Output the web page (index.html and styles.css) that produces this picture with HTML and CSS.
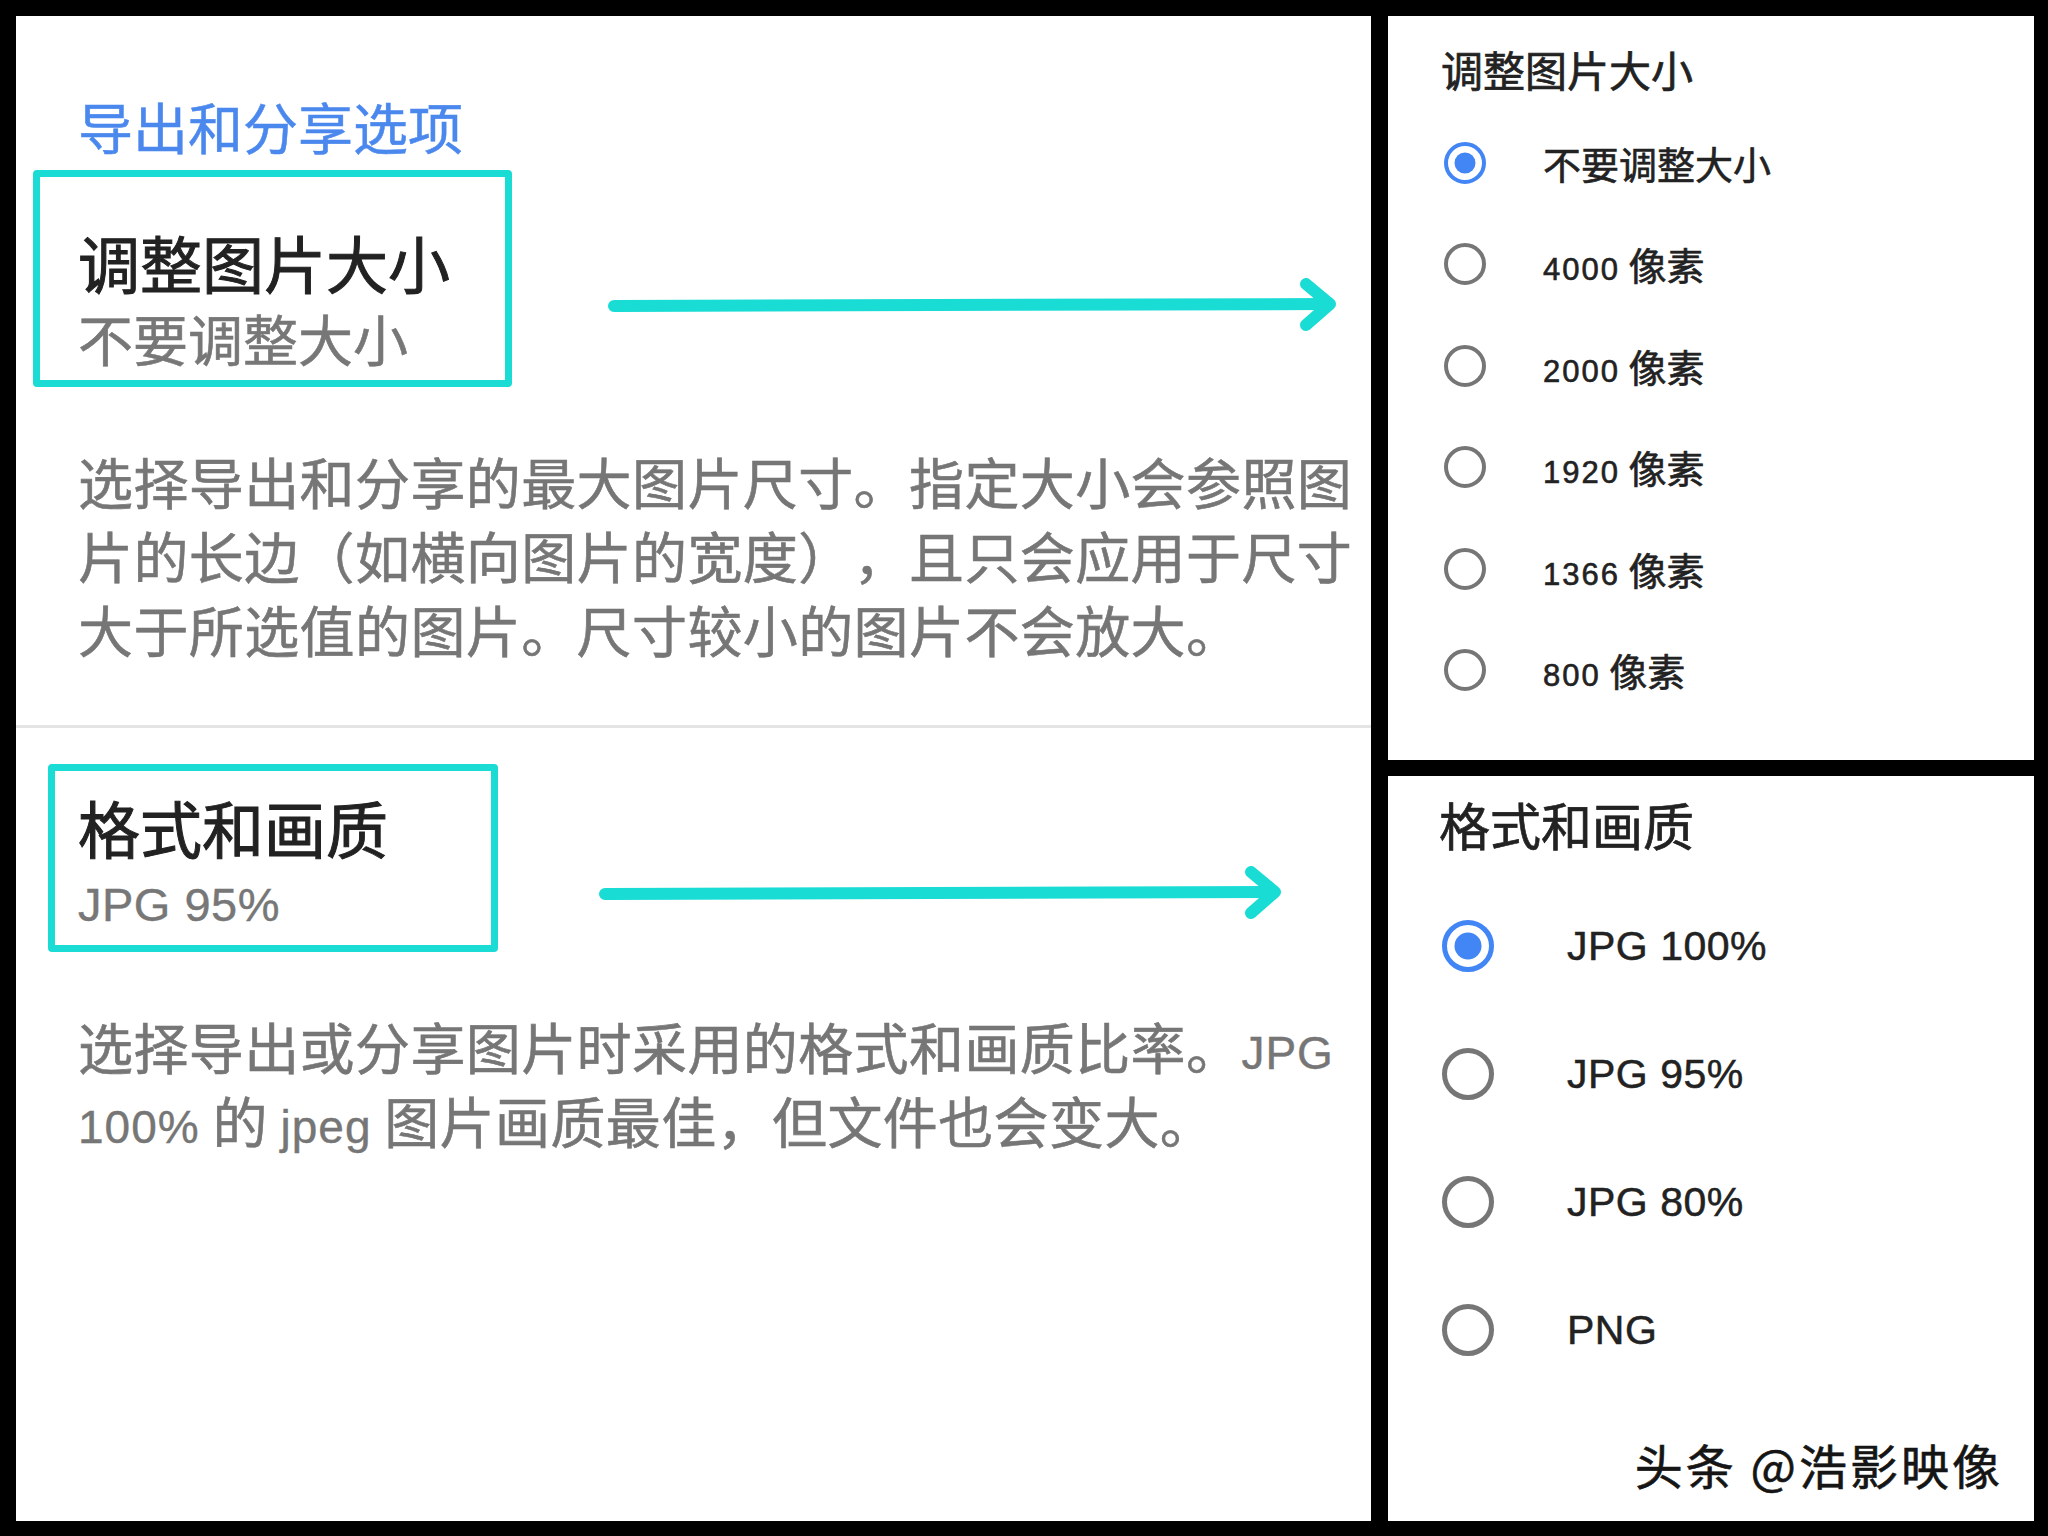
FILE: index.html
```html
<!DOCTYPE html>
<html lang="zh-CN">
<head>
<meta charset="utf-8">
<title>导出和分享选项</title>
<link rel="stylesheet" href="styles.css">
</head>
<body>
<div class="page">
  <section class="main">
    <h1 class="title">导出和分享选项</h1>
    <div class="row row-1">
      <div class="hl hl-1">
        <div class="pref-title">调整图片大小</div>
        <div class="pref-sub">不要调整大小</div>
      </div>
      <svg class="arrow arrow-1" viewBox="0 0 734 60" width="734" height="60">
        <path d="M8 31 L722 29" />
        <polyline points="700,9 724,29 700,50" />
      </svg>
    </div>
    <p class="desc desc-1">选择导出和分享的最大图片尺寸。指定大小会参照图片的长边（如横向图片的宽度），且只会应用于尺寸大于所选值的图片。尺寸较小的图片不会放大。</p>
    <div class="divider"></div>
    <div class="row row-2">
      <div class="hl hl-2">
        <div class="pref-title">格式和画质</div>
        <div class="pref-sub pref-sub-lat">JPG 95%</div>
      </div>
      <svg class="arrow arrow-2" viewBox="0 0 688 60" width="688" height="60">
        <path d="M8 31 L676 29" />
        <polyline points="654,9 678,29 654,50" />
      </svg>
    </div>
    <p class="desc desc-2">选择导出或分享图片时采用的格式和画质比率。<span class="lat">JPG</span> <span class="lat">100%</span> 的 <span class="lat">jpeg</span> 图片画质最佳，但文件也会变大。</p>
  </section>

  <div class="side">
    <section class="dialog dialog-1">
      <h2 class="dlg-title">调整图片大小</h2>
      <ul class="options">
        <li class="opt"><span class="radio on"></span><span class="opt-label">不要调整大小</span></li>
        <li class="opt"><span class="radio"></span><span class="opt-label"><span class="num">4000</span> 像素</span></li>
        <li class="opt"><span class="radio"></span><span class="opt-label"><span class="num">2000</span> 像素</span></li>
        <li class="opt"><span class="radio"></span><span class="opt-label"><span class="num">1920</span> 像素</span></li>
        <li class="opt"><span class="radio"></span><span class="opt-label"><span class="num">1366</span> 像素</span></li>
        <li class="opt"><span class="radio"></span><span class="opt-label"><span class="num">800</span> 像素</span></li>
      </ul>
    </section>
    <section class="dialog dialog-2">
      <h2 class="dlg-title">格式和画质</h2>
      <ul class="options">
        <li class="opt"><span class="radio on"></span><span class="opt-label">JPG 100%</span></li>
        <li class="opt"><span class="radio"></span><span class="opt-label">JPG 95%</span></li>
        <li class="opt"><span class="radio"></span><span class="opt-label">JPG 80%</span></li>
        <li class="opt"><span class="radio"></span><span class="opt-label">PNG</span></li>
      </ul>
      <div class="watermark">头条 @浩影映像</div>
    </section>
  </div>
</div>
</body>
</html>
```

FILE: styles.css
```css
html, body {
  margin: 0;
  padding: 0;
}
body {
  width: 2048px;
  height: 1536px;
  overflow: hidden;
  background: #000;
  font-family: "Noto Sans CJK SC", "Noto Sans", sans-serif;
  text-spacing-trim: space-all;
}
.page {
  display: flex;
  gap: 17px;
  padding: 16px 14px 15px 16px;
  height: 1536px;
  box-sizing: border-box;
}
.main {
  flex: none;
  width: 1355px;
  height: 1505px;
  background: #fff;
}
.title {
  margin: 0;
  padding: 76px 0 0 62px;
  font-size: 55px;
  line-height: 66px;
  font-weight: 400;
  color: #4a88ee;
  -webkit-text-stroke: 0.5px #4a88ee;
}
.row {
  display: flex;
  align-items: flex-start;
}
.row-1 {
  margin: 12px 0 0 17px;
}
.row-2 {
  margin: 36px 0 0 32px;
}
.hl {
  border: 7px solid #1adcd5;
  border-radius: 4px;
  box-sizing: border-box;
  flex: none;
}
.hl-1 {
  width: 479px;
  padding: 47px 0 10px 38px;
}
.hl-2 {
  width: 450px;
  padding: 18px 0 7px 23px;
}
.pref-title {
  font-size: 62px;
  line-height: 76px;
  color: #222;
  -webkit-text-stroke: 1px #222;
}
.pref-sub {
  margin-top: 4px;
  font-size: 55px;
  line-height: 66px;
  color: #777;
  -webkit-text-stroke: 0.6px #777;
}
.pref-sub-lat {
  margin-top: 7px;
  font-family: "Liberation Sans", Arial, sans-serif;
  font-size: 47px;
  letter-spacing: 0.5px;
  -webkit-text-stroke: 0.4px #777;
}
.arrow {
  flex: none;
  fill: none;
  stroke: #19dcd4;
  stroke-width: 12;
  stroke-linecap: round;
  stroke-linejoin: round;
}
.arrow-1 {
  margin: 105px 0 0 94px;
}
.arrow-2 {
  margin: 99px 0 0 99px;
}
.desc {
  margin: 0 0 0 62px;
  max-width: 1290px;
  font-size: 55px;
  line-height: 74px;
  letter-spacing: 0.4px;
  color: #767676;
  -webkit-text-stroke: 0.6px #767676;
}
.desc-1 {
  margin-top: 56px;
}
.desc-2 {
  margin-top: 56px;
}
.lat {
  font-family: "Liberation Sans", Arial, sans-serif;
  font-size: 46px;
  line-height: 1;
  letter-spacing: 1px;
  -webkit-text-stroke: 0.4px #767676;
}
.divider {
  margin-top: 60px;
  height: 3px;
  background: #e4e4e4;
}

.side {
  flex: none;
  width: 646px;
  display: flex;
  flex-direction: column;
  gap: 16px;
}
.dialog {
  background: #fff;
  display: flex;
  flex-direction: column;
}
.dialog-1 {
  height: 744px;
}
.dialog-2 {
  height: 745px;
}
.dlg-title {
  margin: 0;
  font-weight: 400;
  color: #222;
  -webkit-text-stroke: 0.7px #222;
}
.dialog-1 .dlg-title {
  margin: 25px 0 0 53px;
  font-size: 42px;
  line-height: 56px;
}
.dialog-2 .dlg-title {
  margin: 16px 0 0 51px;
  font-size: 51px;
  line-height: 64px;
}
.options {
  list-style: none;
  margin: 0;
  padding: 0;
}
.dialog-1 .options {
  margin-top: 15px;
}
.dialog-2 .options {
  margin-top: 26px;
}
.opt {
  display: flex;
  align-items: center;
}
.dialog-1 .opt {
  height: 101.5px;
  padding-left: 56px;
}
.dialog-2 .opt {
  height: 128px;
  padding-left: 54px;
}
.radio {
  flex: none;
  position: relative;
  box-sizing: border-box;
  border-radius: 50%;
  border-style: solid;
  border-color: #767676;
}
.dialog-1 .radio {
  width: 42px;
  height: 42px;
  border-width: 4.5px;
}
.dialog-2 .radio {
  width: 52px;
  height: 52px;
  border-width: 5.5px;
}
.radio.on {
  border-color: #4285f4;
}
.radio.on::after {
  content: "";
  position: absolute;
  left: 50%;
  top: 50%;
  border-radius: 50%;
  background: #4285f4;
  transform: translate(-50%, -50%);
}
.dialog-1 .radio.on::after {
  width: 21px;
  height: 21px;
}
.dialog-2 .radio.on::after {
  width: 27px;
  height: 27px;
}
.opt-label {
  color: #222;
  -webkit-text-stroke: 0.6px #222;
}
.dialog-1 .opt-label {
  margin-left: 57px;
  font-size: 38px;
  line-height: 50px;
}
.num {
  font-family: "Liberation Sans", Arial, sans-serif;
  font-size: 31px;
  letter-spacing: 2px;
  line-height: 1;
}
.dialog-2 .opt-label {
  margin-left: 73px;
  font-family: "Liberation Sans", Arial, sans-serif;
  font-size: 41px;
  line-height: 50px;
  letter-spacing: 0.5px;
  -webkit-text-stroke: 0.5px #222;
}
.watermark {
  margin: auto 31px 27px 0;
  align-self: flex-end;
  font-size: 48px;
  line-height: 60px;
  letter-spacing: 3px;
  color: #151515;
  -webkit-text-stroke: 0.6px #151515;
}
```
